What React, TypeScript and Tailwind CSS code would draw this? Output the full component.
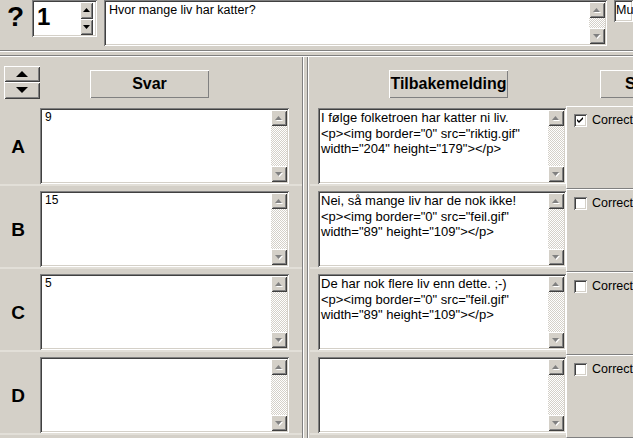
const sunken =
  'shadow-[inset_1px_1px_0_#808080,inset_-1px_-1px_0_#ffffff,inset_2px_2px_0_#404040,inset_-2px_-2px_0_#d4d0c8]';
const raised =
  'shadow-[inset_1px_1px_0_#ffffff,inset_-1px_-1px_0_#404040,inset_2px_2px_0_#d4d0c8,inset_-2px_-2px_0_#808080]';
const button = 'shadow-[inset_1px_1px_0_#ffffff,inset_-1px_-1px_0_#808080]';

function Arrow({ up, disabled = false, w = 7, h = 4 }: { up: boolean; disabled?: boolean; w?: number; h?: number }) {
  const pts = up ? `0,${h} ${w},${h} ${w / 2},0` : `0,0 ${w},0 ${w / 2},${h}`;
  return (
    <svg width={w + 1} height={h + 1} viewBox={`0 0 ${w + 1} ${h + 1}`}>
      {disabled && <polygon points={pts} fill="#ffffff" transform="translate(1,1)" />}
      <polygon points={pts} fill={disabled ? '#808080' : '#000000'} />
    </svg>
  );
}

function ScrollButton({ up }: { up: boolean }) {
  return (
    <div className={`flex size-[16px] shrink-0 items-center justify-center bg-[#d4d0c8] ${raised}`}>
      <Arrow up={up} disabled />
    </div>
  );
}

function ScrollBar() {
  return (
    <div className="flex w-[16px] shrink-0 flex-col self-stretch">
      <ScrollButton up />
      <div className="flex-1 bg-[repeating-conic-gradient(#ffffff_0_25%,#d4d0c8_0_50%)] bg-[length:2px_2px]" />
      <ScrollButton up={false} />
    </div>
  );
}

function TextBox({ lines, className, pad }: { lines: string[]; className: string; pad: string }) {
  return (
    <div className={`flex shrink-0 bg-white p-[2px] ${sunken} ${className}`}>
      <div className={`min-w-0 flex-1 overflow-hidden leading-[15.5px] text-black ${pad}`}>
        {lines.map((line, i) => (
          <div key={i} className="whitespace-nowrap">
            {line}
          </div>
        ))}
      </div>
      <ScrollBar />
    </div>
  );
}

function CheckBox({ checked }: { checked: boolean }) {
  return (
    <div className={`flex size-[13px] shrink-0 items-center justify-center bg-white ${sunken}`}>
      {checked && (
        <svg width="7" height="7" viewBox="0 0 7 7">
          <path d="M0 2 L2 4 L6 0 L6 2 L2 6 L0 4 Z" fill="#000000" />
        </svg>
      )}
    </div>
  );
}

const rows = [
  {
    letter: 'A',
    answer: ['9'],
    feedback: [
      'I følge folketroen har katter ni liv.',
      '<p><img border="0" src="riktig.gif"',
      'width="204" height="179"></p>',
    ],
    correct: true,
  },
  {
    letter: 'B',
    answer: ['15'],
    feedback: [
      'Nei, så mange liv har de nok ikke!',
      '<p><img border="0" src="feil.gif"',
      'width="89" height="109"></p>',
    ],
    correct: false,
  },
  {
    letter: 'C',
    answer: ['5'],
    feedback: [
      'De har nok flere liv enn dette. ;-)',
      '<p><img border="0" src="feil.gif"',
      'width="89" height="109"></p>',
    ],
    correct: false,
  },
  { letter: 'D', answer: [], feedback: [], correct: false },
];

export default function App() {
  return (
    <div className="h-[438px] w-[633px] overflow-hidden bg-[#d4d0c8] font-['Liberation_Sans',Arial,sans-serif] text-black">
      {/* question bar */}
      <div className="flex h-[50px] items-start">
        <div className="ml-[7px] mt-[3px] w-[25px] shrink-0 text-[28px] font-bold leading-none">?</div>
        <div className={`flex h-[37px] w-[65px] shrink-0 bg-white p-[2px] ${sunken}`}>
          <div className="flex-1 pl-[3px] pt-[3px] text-[24px] font-bold leading-none">1</div>
          <div className="mr-[2px] flex w-[13px] flex-col">
            <div className={`flex h-[17px] items-center justify-center bg-[#d4d0c8] ${raised}`}>
              <Arrow up />
            </div>
            <div className={`flex h-[16px] items-center justify-center bg-[#d4d0c8] ${raised}`}>
              <Arrow up={false} />
            </div>
          </div>
        </div>
        <TextBox
          lines={['Hvor mange liv har katter?']}
          className="ml-[7px] h-[46px] w-[503px] text-[12.5px]"
          pad="pl-[3px] pt-[1px]"
        />
        <div className={`ml-[7px] h-[22px] w-[19px] shrink-0 overflow-hidden bg-white pl-[2px] pt-[3px] text-[12.5px] leading-[15px] ${sunken}`}>
          Mu
        </div>
      </div>

      {/* separator */}
      <div className="flex h-[7px] flex-col">
        <div className="h-px bg-[#808080]" />
        <div className="h-px bg-white" />
        <div className="h-[3px]" />
        <div className="h-px bg-[#808080]" />
        <div className="h-px bg-white" />
      </div>

      <div className="flex h-[381px]">
        {/* answers */}
        <div className="flex w-[302px] shrink-0 flex-col">
          <div className="flex h-[49px] items-start">
            <div className="ml-[4px] mt-[9px] flex w-[36px] shrink-0 flex-col">
              <div className={`flex h-[16px] items-center justify-center bg-[#d4d0c8] ${raised}`}>
                <Arrow up w={12} h={6} />
              </div>
              <div className={`flex h-[17px] items-center justify-center bg-[#d4d0c8] ${raised}`}>
                <Arrow up={false} w={12} h={6} />
              </div>
            </div>
            <div
              className={`ml-[50px] mt-[13px] flex h-[28px] w-[119px] shrink-0 items-center justify-center text-[16px] font-bold ${button}`}
            >
              Svar
            </div>
          </div>
          {rows.map((row) => (
            <div key={row.letter} className="flex h-[83px] flex-col">
              <div className="flex h-[78px] items-start pt-[2px]">
                <div className="flex h-[76px] w-[36px] shrink-0 items-center justify-center text-[19px] font-bold leading-none">
                  {row.letter}
                </div>
                <TextBox lines={row.answer} className="ml-[4px] h-[76px] w-[249px] text-[12px]" pad="pl-[3px]" />
              </div>
              <div className="h-[2px] bg-[#e2dfd8]" />
            </div>
          ))}
        </div>

        {/* divider */}
        <div className="flex w-[8px] shrink-0">
          <div className="w-px bg-[#808080]" />
          <div className="w-px bg-white" />
          <div className="w-[3px]" />
          <div className="w-px bg-[#808080]" />
          <div className="w-px bg-white" />
        </div>

        {/* feedback */}
        <div className="flex min-w-0 flex-1 flex-col overflow-hidden">
          <div className="flex h-[49px] items-start">
            <div
              className={`ml-[79px] mt-[13px] flex h-[28px] w-[119px] shrink-0 items-center justify-center text-[16px] font-bold ${button}`}
            >
              Tilbakemelding
            </div>
            <div
              className={`ml-[92px] mt-[13px] flex h-[28px] w-[95px] shrink-0 items-center justify-start pl-[25px] text-[16px] font-bold ${button}`}
            >
              S
            </div>
          </div>
          {rows.map((row) => (
            <div key={row.letter} className="flex h-[83px]">
              <div className="flex w-[256px] shrink-0 flex-col">
                <div className="h-[78px] pt-[2px]">
                  <TextBox lines={row.feedback} className="ml-[8px] h-[76px] w-[248px] text-[13px]" pad="pl-[1px]" />
                </div>
                <div className="h-[2px] bg-[#e2dfd8]" />
              </div>
              <div className="flex min-w-0 flex-1 flex-col border-b border-l border-t border-b-[#808080] border-l-white border-t-white">
                <div className="ml-[7px] mt-[6px] flex items-center gap-[5px] text-[12.5px] leading-[14px]">
                  <CheckBox checked={row.correct} />
                  <span className="whitespace-nowrap">Correct</span>
                </div>
              </div>
            </div>
          ))}
        </div>
      </div>
    </div>
  );
}
